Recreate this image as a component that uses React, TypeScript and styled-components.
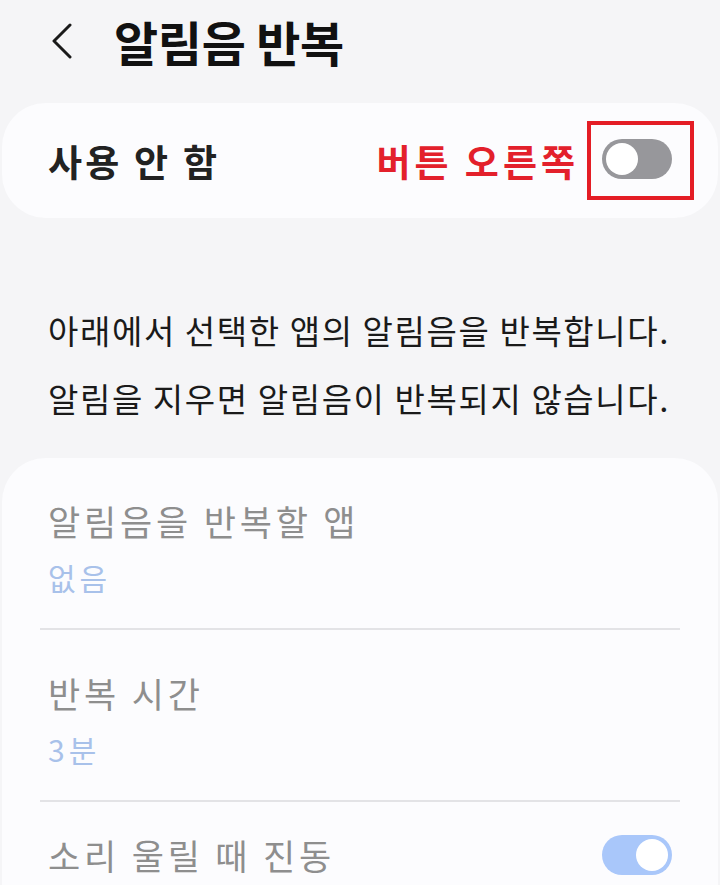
import React from "react";
import styled, { createGlobalStyle } from "styled-components";

const Global = createGlobalStyle`
  html, body {
    margin: 0;
    padding: 0;
    background: #f5f5f7;
    overflow: hidden;
  }
  body {
    font-family: "Noto Sans CJK KR", "Noto Sans", sans-serif;
    -webkit-font-smoothing: antialiased;
  }
`;

const Page = styled.div`
  width: 720px;
  height: 885px;
  display: flex;
  flex-direction: column;
  background: #f5f5f7;
  overflow: hidden;
`;

const Header = styled.header`
  height: 103px;
  display: flex;
  align-items: center;
  padding: 0 0 22px 52px;
  box-sizing: border-box;
`;

const BackButton = styled.button`
  width: 20px;
  height: 36px;
  padding: 0;
  border: 0;
  background: none;
  display: flex;
  margin-right: 42px;
`;

const Title = styled.h1`
  margin: 0;
  font-size: 48px;
  font-weight: 700;
  color: #111;
  letter-spacing: -0.3px;
  line-height: 1;
`;

const Card = styled.section`
  margin: 0 2px;
  background: #fcfcfe;
  border-radius: 44px;
`;

const MasterRow = styled(Card)`
  height: 115px;
  display: flex;
  align-items: center;
  padding: 0 24px 0 46px;
  box-sizing: border-box;
`;

const MasterLabel = styled.span`
  flex: 1;
  font-size: 37px;
  font-weight: 700;
  color: #222;
  letter-spacing: 3.2px;
`;

const Note = styled.span`
  font-size: 37px;
  font-weight: 700;
  color: #e3202b;
  letter-spacing: 4px;
  margin-right: 8px;
`;

const Frame = styled.div`
  display: flex;
  border: 4px solid #e41d25;
  padding: 14px 18px 17px 11px;
`;

const Switch = styled.div<{ $on?: boolean }>`
  position: relative;
  width: 70px;
  height: 40px;
  border-radius: 20px;
  background: ${(p) => (p.$on ? "#a9c7fa" : "#97979b")};
  flex: none;

  &::after {
    content: "";
    position: absolute;
    top: 4px;
    left: ${(p) => (p.$on ? "34px" : "4px")};
    width: 32px;
    height: 32px;
    border-radius: 50%;
    background: #fff;
  }
`;

const Description = styled.div`
  margin: 78px 0 26px;
  padding-left: 48px;
  font-size: 33px;
  line-height: 68px;
  color: #1a1a1a;
  letter-spacing: 1.6px;
`;

const ListCard = styled(Card)`
  flex: 1;
  border-radius: 44px 44px 0 0;
`;

const Item = styled.div<{ $last?: boolean }>`
  display: flex;
  align-items: center;
  padding: ${(p) => (p.$last ? "31px 46px 0 46px" : "41px 46px 31px 46px")};
`;

const ItemText = styled.div`
  flex: 1;
  display: flex;
  flex-direction: column;
`;

const ItemTitle = styled.span`
  font-size: 35px;
  line-height: 44px;
  color: #8e8e8e;
  letter-spacing: 3.8px;
`;

const ItemValue = styled.span`
  margin-top: 14px;
  font-size: 30px;
  line-height: 40px;
  color: #a8c1ea;
  letter-spacing: 4px;
`;

const Divider = styled.hr`
  margin: 0 38px;
  border: 0;
  height: 2px;
  background: #e3e3e6;
`;

function Chevron() {
  return (
    <svg width="20" height="36" viewBox="0 0 20 36" fill="none">
      <polyline
        points="18,2 2,18 18,34"
        stroke="#1a1a1a"
        strokeWidth="3"
        strokeLinecap="round"
        strokeLinejoin="round"
      />
    </svg>
  );
}

export default function App() {
  return (
    <>
      <Global />
      <Page>
        <Header>
          <BackButton aria-label="뒤로">
            <Chevron />
          </BackButton>
          <Title>알림음 반복</Title>
        </Header>

        <MasterRow>
          <MasterLabel>사용 안 함</MasterLabel>
          <Note>버튼 오른쪽</Note>
          <Frame>
            <Switch />
          </Frame>
        </MasterRow>

        <Description>
          아래에서 선택한 앱의 알림음을 반복합니다.
          <br />
          알림을 지우면 알림음이 반복되지 않습니다.
        </Description>

        <ListCard>
          <Item>
            <ItemText>
              <ItemTitle>알림음을 반복할 앱</ItemTitle>
              <ItemValue>없음</ItemValue>
            </ItemText>
          </Item>
          <Divider />
          <Item>
            <ItemText>
              <ItemTitle>반복 시간</ItemTitle>
              <ItemValue>3분</ItemValue>
            </ItemText>
          </Item>
          <Divider />
          <Item $last>
            <ItemText>
              <ItemTitle>소리 울릴 때 진동</ItemTitle>
            </ItemText>
            <Switch $on />
          </Item>
        </ListCard>
      </Page>
    </>
  );
}
